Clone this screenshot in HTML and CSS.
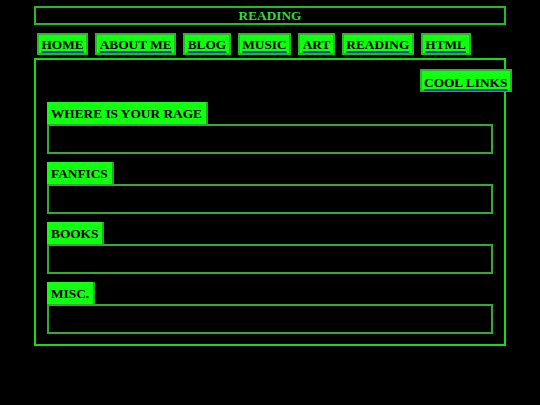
FILE: index.html
```html
<!DOCTYPE html>
<html>
<head>
<meta charset="utf-8">
<link rel="stylesheet" href="styles.css">
</head>
<body>
<div class="page">
  <header class="title">READING</header>
  <nav class="nav">
    <a class="btn" href="#">HOME</a>
    <a class="btn" href="#">ABOUT ME</a>
    <a class="btn" href="#">BLOG</a>
    <a class="btn" href="#">MUSIC</a>
    <a class="btn" href="#">ART</a>
    <a class="btn" href="#">READING</a>
    <a class="btn" href="#">HTML</a>
  </nav>
  <main class="main">
    <div class="cool-row"><a class="btn cool" href="#">COOL LINKS</a></div>
    <section class="sec">
      <div class="label">WHERE IS YOUR RAGE</div>
      <div class="box"></div>
    </section>
    <section class="sec">
      <div class="label">FANFICS</div>
      <div class="box"></div>
    </section>
    <section class="sec">
      <div class="label">BOOKS</div>
      <div class="box"></div>
    </section>
    <section class="sec">
      <div class="label">MISC.</div>
      <div class="box"></div>
    </section>
  </main>
</div>
</body>
</html>
```
FILE: styles.css
```css
html, body {
  margin: 0;
  padding: 0;
  background: #000;
}
body {
  font-family: "Liberation Serif", "Times New Roman", serif;
  font-weight: bold;
  font-size: 13.33px;
}
.page {
  width: 472px;
  margin: 0 auto;
  padding-top: 6px;
}
.title {
  box-sizing: border-box;
  height: 19px;
  border: 2px solid #22bb22;
  color: #33dd33;
  text-align: center;
  line-height: 15px;
}
.nav {
  display: flex;
  gap: 7px;
  padding-left: 3px;
  margin-top: 8px;
}
.btn {
  display: block;
  box-sizing: border-box;
  height: 22px;
  line-height: 20px;
  padding: 0 2.5px;
  background: #11ff11;
  border: 2px solid #22bb22;
  color: #000;
  text-decoration: underline;
  text-decoration-color: #23449a;
  text-decoration-thickness: 1.5px;
  text-underline-offset: 1.5px;
}
.main {
  box-sizing: border-box;
  height: 288px;
  margin-top: 3px;
  border: 2px solid #11dd11;
  padding: 9px 11px 9px 11px;
}
.cool-row {
  display: flex;
  justify-content: flex-end;
  margin-right: -19px;
}
.cool {
  height: 23px;
  line-height: 20px;
  padding: 2px 2px 0 2px;
  width: 92px;
}
.sec {
  display: flex;
  flex-direction: column;
  align-items: flex-start;
  margin-top: 8.5px;
}
.cool-row + .sec {
  margin-top: 10px;
}
.label {
  box-sizing: border-box;
  height: 22px;
  line-height: 22px;
  padding: 1px 4px 0 4px;
  background: #11ff11;
  border-right: 2px solid #22aa22;
  color: #000;
}
.box {
  box-sizing: border-box;
  align-self: stretch;
  height: 29.5px;
  border: 2px solid #33aa33;
}
```
